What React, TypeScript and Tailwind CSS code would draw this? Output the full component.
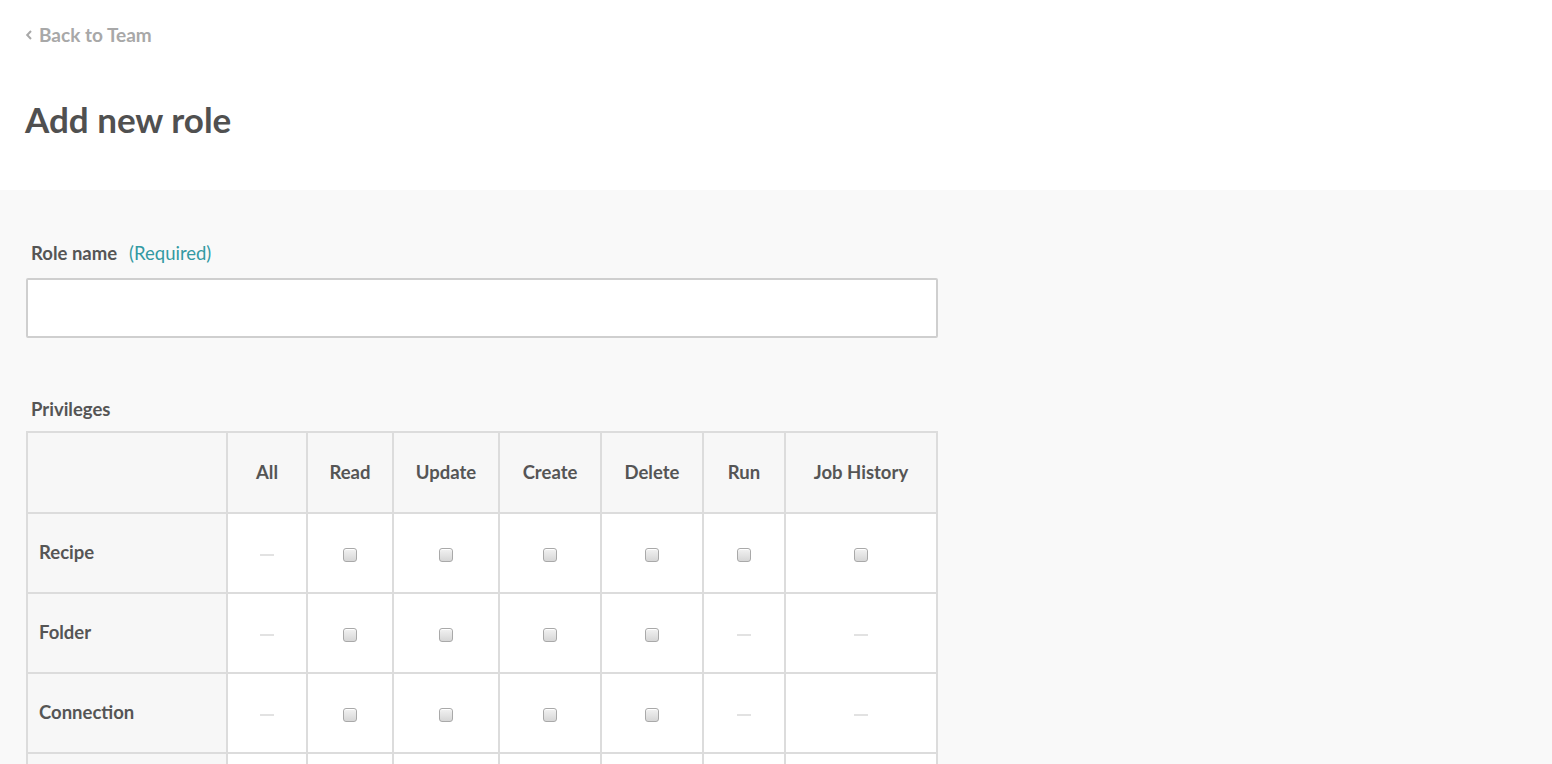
const columns = ['All', 'Read', 'Update', 'Create', 'Delete', 'Run', 'Job History'];

type Cell = 'box' | 'dash';

const rows: { name: string; cells: Cell[] }[] = [
  { name: 'Recipe', cells: ['dash', 'box', 'box', 'box', 'box', 'box', 'box'] },
  { name: 'Folder', cells: ['dash', 'box', 'box', 'box', 'box', 'dash', 'dash'] },
  { name: 'Connection', cells: ['dash', 'box', 'box', 'box', 'box', 'dash', 'dash'] },
  { name: 'Lookup table', cells: ['dash', 'box', 'box', 'box', 'box', 'dash', 'dash'] },
];

const Checkbox = () => (
  <span className="block h-[14px] w-[14px] rounded-[3px] border border-[#a9a9a9] bg-gradient-to-b from-[#f2f2f2] to-[#d6d6d6] shadow-[inset_0_1px_0_#fff]" />
);

const Dash = () => <span className="block h-[2px] w-[14px] bg-[#e2e2e2]" />;

const App = () => {
  return (
    <div className="min-h-screen bg-[#f9f9f9] font-['Lato','Noto_Sans',sans-serif] text-[#555]">
      <header className="bg-white px-[25px] pt-[24px] pb-[49px]">
        <a href="#" className="flex items-center gap-[6px] text-[19px] font-bold leading-[22px] text-[#a8a8a8]">
          <svg width="8" height="12" viewBox="0 0 8 12" fill="none" aria-hidden="true">
            <path d="M6 2 2.2 6 6 10" stroke="currentColor" strokeWidth="2" />
          </svg>
          Back to Team
        </a>
        <h1 className="mt-[51px] text-[35px] font-bold leading-[44px] text-[#505050]">Add new role</h1>
      </header>

      <main className="px-[26px] pt-[52px] pb-10">
        <label className="ml-[5px] flex items-center gap-[12px] text-[18.5px] leading-[22px]">
          <span className="font-bold">Role name</span>
          <span className="text-[#3399a3]">(Required)</span>
        </label>
        <input
          type="text"
          className="mt-[14px] block h-[60px] w-[912px] rounded-[2px] border-2 border-[#cfcfcf] bg-white px-3 text-[17px] outline-none"
        />

        <div className="ml-[5px] mt-[60px] text-[18.5px] font-bold leading-[22px]">Privileges</div>

        <div className="mt-[11px] grid w-[912px] grid-cols-[198px_78px_84px_104px_100px_100px_80px_150px] gap-[2px] border-2 border-[#dcdcdc] bg-[#dcdcdc]">
          <div className="h-[79px] bg-[#f7f7f7]" />
          {columns.map((col) => (
            <div key={col} className="flex h-[79px] items-center justify-center bg-[#f7f7f7] text-[18.5px] font-bold">
              {col}
            </div>
          ))}
          {rows.map((row) => (
            <>
              <div key={row.name} className="flex h-[78px] items-center bg-[#f7f7f7] px-[11px] text-[18.5px] font-bold">
                {row.name}
              </div>
              {row.cells.map((cell, i) => (
                <div key={row.name + i} className="flex h-[78px] items-center justify-center bg-white pt-[3px]">
                  {cell === 'box' ? <Checkbox /> : <Dash />}
                </div>
              ))}
            </>
          ))}
        </div>
      </main>
    </div>
  );
};

export default App;
